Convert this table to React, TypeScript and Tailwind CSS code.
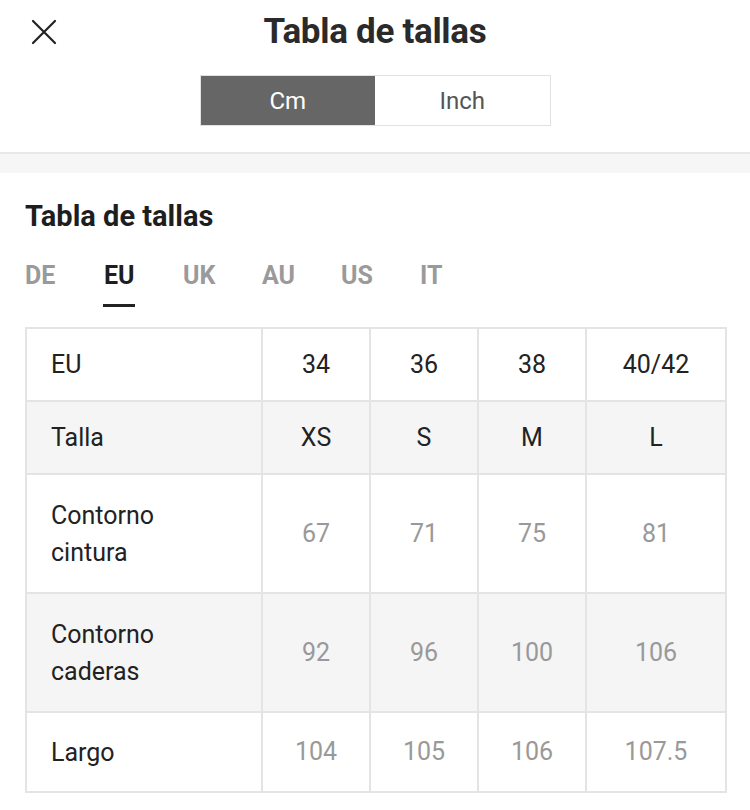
const units = ["Cm", "Inch"];
const regions = ["DE", "EU", "UK", "AU", "US", "IT"];

type Row = {
  label: string[];
  values: string[];
  muted?: boolean;
  height: string;
};

const rows: Row[] = [
  { label: ["EU"], values: ["34", "36", "38", "40/42"], height: "h-[73px]" },
  { label: ["Talla"], values: ["XS", "S", "M", "L"], height: "h-[73px]" },
  { label: ["Contorno", "cintura"], values: ["67", "71", "75", "81"], muted: true, height: "h-[119px]" },
  { label: ["Contorno", "caderas"], values: ["92", "96", "100", "106"], muted: true, height: "h-[119px]" },
  { label: ["Largo"], values: ["104", "105", "106", "107.5"], muted: true, height: "h-[80px]" },
];

function CloseIcon() {
  return (
    <svg width="26" height="26" viewBox="0 0 26 26" fill="none" stroke="#222" strokeWidth="2.2" strokeLinecap="round">
      <path d="M2 2 L24 24 M24 2 L2 24" />
    </svg>
  );
}

export default function App() {
  return (
    <div className="w-[750px] min-h-[810px] bg-white font-['Roboto',sans-serif] text-[#222]">
      <header className="relative flex h-[152px] flex-col items-center">
        <div className="absolute left-[31px] top-[19px]">
          <CloseIcon />
        </div>
        <h1 className="mt-[10px] text-[35px] font-bold leading-[44px] tracking-[-0.3px] text-[#2a2a2a]">Tabla de tallas</h1>
        <div className="mt-[21px] flex h-[51px] w-[351px] border border-[#e2e2e2]">
          {units.map((u, i) => (
            <div
              key={u}
              className={
                i === 0
                  ? "flex flex-1 items-center justify-center bg-[#666] text-[24px] text-white"
                  : "flex flex-1 items-center justify-center bg-white text-[24px] text-[#555]"
              }
            >
              {u}
            </div>
          ))}
        </div>
      </header>

      <div className="h-[21px] border-t-2 border-[#e8e8e8] bg-[#f6f6f6]" />

      <section className="px-[25px] pt-[25px]">
        <h2 className="text-[29px] font-bold leading-[36px] text-[#1e1e1e]">Tabla de tallas</h2>

        <div className="mt-[26px] flex">
          {regions.map((r) => (
            <div key={r} className="flex w-[79px] flex-col items-start">
              <span
                className={
                  r === "EU"
                    ? "text-[25px] font-bold leading-[32px] text-[#1e1e1e]"
                    : "text-[25px] font-bold leading-[32px] text-[#9a9a9a]"
                }
              >
                {r}
              </span>
              <span className={r === "EU" ? "ml-[-1px] mt-[12px] h-[3px] w-[32px] bg-[#222]" : "mt-[12px] h-[3px] w-[32px]"} />
            </div>
          ))}
        </div>

        <table className="mt-[20px] w-[700px] table-fixed border-collapse text-[25px]">
          <colgroup>
            <col className="w-[236px]" />
            <col className="w-[108px]" />
            <col className="w-[108px]" />
            <col className="w-[108px]" />
            <col className="w-[140px]" />
          </colgroup>
          <tbody>
            {rows.map((row, ri) => (
              <tr key={ri} className={`${row.height} ${ri % 2 === 1 ? "bg-[#f5f5f5]" : "bg-white"}`}>
                <td className="border-2 border-[#e4e4e4] pl-[24px] leading-[37px] text-[#222]">
                  {row.label.map((l) => (
                    <div key={l}>{l}</div>
                  ))}
                </td>
                {row.values.map((v, vi) => (
                  <td
                    key={vi}
                    className={`border-2 border-[#e4e4e4] text-center ${row.muted ? "text-[#999]" : "text-[#222]"}`}
                  >
                    {v}
                  </td>
                ))}
              </tr>
            ))}
          </tbody>
        </table>
      </section>
    </div>
  );
}
